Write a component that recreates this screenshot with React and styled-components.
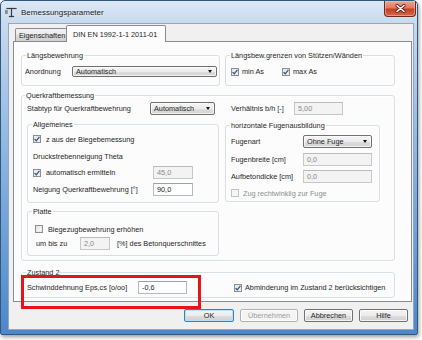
import React from 'react';
import styled, { createGlobalStyle } from 'styled-components';

const Global = createGlobalStyle`
  html, body { margin: 0; padding: 0; background: #ffffff; }
  body {
    font-family: "Liberation Sans", Arial, sans-serif;
    font-size: 7.3px;
    color: #262626;
  }
  * { box-sizing: border-box; }
`;

const Stage = styled.div`
  width: 422px;
  height: 340px;
  overflow: hidden;
  background: #ffffff;
`;

const Window = styled.div`
  width: 418px;
  height: 335px;
  display: flex;
  flex-direction: column;
  border: 1px solid #31577f;
  border-radius: 5px 5px 2px 2px;
  background: linear-gradient(180deg, #dce8f4 0px, #c8daee 22px, #a8c5e5 90px, #7ba8da 200px, #4d87c8 100%);
  box-shadow: 1px 2px 4px rgba(0, 0, 0, 0.4);
`;

const TitleBar = styled.div`
  height: 22px;
  display: flex;
  align-items: center;
  padding-left: 4px;
  flex: none;
`;

const Title = styled.span`
  margin-left: 4px;
  font-size: 8px;
  color: #1a1a1a;
  text-shadow: 0 0 3px rgba(255, 255, 255, 0.9);
`;

const CloseButton = styled.div`
  align-self: flex-start;
  margin-left: auto;
  margin-right: 1px;
  width: 32px;
  height: 16px;
  border: 1px solid #6a2a1d;
  border-top: none;
  border-radius: 0 0 4px 4px;
  background: linear-gradient(180deg, #e9a897 0%, #d97b64 45%, #c4401f 55%, #d56a4d 100%);
  box-shadow: inset 0 0 0 1px rgba(255, 210, 200, 0.45);
  display: flex;
  align-items: center;
  justify-content: center;
`;

const Client = styled.div`
  flex: 1;
  margin: 0 3px 4px 7px;
  border: 1px solid #8ea8c6;
  background: #f0f0f0;
  display: flex;
  flex-direction: column;
  padding: 1px 1px 0 4px;
`;

const TabStrip = styled.div`
  display: flex;
  align-items: flex-end;
  height: 16px;
  padding-left: 2px;
  flex: none;
`;

const Tab = styled.div`
  position: relative;
  z-index: ${p => (p.$active ? 2 : 1)};
  height: ${p => (p.$active ? 17 : 13)}px;
  width: ${p => p.$w}px;
  margin-left: ${p => (p.$active ? -2 : 0)}px;
  margin-bottom: ${p => (p.$active ? -1 : 0)}px;
  padding-left: ${p => (p.$active ? 6 : 3)}px;
  border: 1px solid #898c95;
  border-bottom: none;
  border-radius: 2px 2px 0 0;
  background: ${p => (p.$active ? '#fcfcfc' : 'linear-gradient(180deg, #f2f2f2, #ebebeb 50%, #dddddd 50%, #cfcfcf)')};
  display: flex;
  align-items: center;
  white-space: nowrap;
  color: #1e1e1e;
`;

const Panel = styled.div`
  border: 1px solid #898c95;
  background: #fcfcfc;
  padding: 9px 16px 3px 7px;
  display: flex;
  flex-direction: column;
`;

const TopRow = styled.div`
  display: grid;
  grid-template-columns: 199px 170px;
  column-gap: 5px;
`;

const Group = styled.fieldset`
  position: relative;
  margin: ${p => p.$mt ?? 0}px 0 0 0;
  padding: 0;
  min-width: 0;
  border: 1px solid #d5dfe5;
  border-radius: 3px;
  box-shadow: inset 1px 1px 0 #ffffff, 1px 1px 0 #ffffff;
`;

const Legend = styled.legend`
  margin-left: ${p => p.$lx ?? 4}px;
  padding: 0 1px;
  height: 9px;
  line-height: 9px;
  font-size: 7.3px;
  color: #262626;
  white-space: nowrap;
`;

const GroupBody = styled.div`
  display: flex;
  flex-direction: column;
  padding: ${p => p.$pad};
`;

const Columns = styled.div`
  display: grid;
  grid-template-columns: 192px 155px;
  column-gap: 6px;
  align-items: start;
  margin-top: ${p => p.$mt ?? 0}px;
`;

const Column = styled.div`
  display: flex;
  flex-direction: column;
  padding-top: ${p => p.$pt ?? 0}px;
  padding-left: ${p => p.$pl ?? 0}px;
`;

const Field = styled.div`
  display: grid;
  grid-template-columns: ${p => p.$cols};
  align-items: center;
  height: ${p => p.$h ?? 13}px;
  margin-top: ${p => p.$mt ?? 0}px;
  padding-left: ${p => p.$pl ?? 0}px;
`;

const Label = styled.span`
  white-space: nowrap;
  line-height: 9px;
  padding-left: ${p => p.$pl ?? 0}px;
  color: ${p => (p.$disabled ? '#8c8c8c' : 'inherit')};
`;

const TextLine = styled.div`
  height: 10px;
  line-height: 10px;
  white-space: nowrap;
  margin-top: ${p => p.$mt ?? 0}px;
`;

const InputBox = styled.div`
  height: ${p => p.$h ?? 13}px;
  border: 1px solid ${p => (p.$disabled ? '#c6c8cc' : '#b6b9c1')};
  border-top-color: ${p => (p.$disabled ? '#b9bbbf' : '#9da1aa')};
  background: ${p => (p.$disabled ? '#f3f3f3' : '#ffffff')};
  color: ${p => (p.$disabled ? '#8a8a8a' : '#1e1e1e')};
  padding-left: 3px;
  display: flex;
  align-items: center;
  white-space: nowrap;
`;

const SelectBox = styled.div`
  height: ${p => p.$h ?? 13}px;
  border: 1px solid #707070;
  border-radius: 2px;
  background: linear-gradient(180deg, #f4f4f4, #ececec 50%, #dfdfdf 50%, #d2d2d2);
  box-shadow: inset 0 0 0 1px rgba(255, 255, 255, 0.7);
  display: flex;
  align-items: center;
  justify-content: space-between;
  padding: 0 4px 0 3px;
  white-space: nowrap;
  color: #1e1e1e;
`;

const Arrow = styled.span`
  width: 0;
  height: 0;
  border-left: 2.5px solid transparent;
  border-right: 2.5px solid transparent;
  border-top: 3px solid #111;
`;

const CheckItem = styled.div`
  display: flex;
  align-items: center;
  gap: ${p => p.$gap ?? 5}px;
  height: 10px;
  white-space: nowrap;
  width: ${p => (p.$w ? `${p.$w}px` : 'auto')};
  margin-top: ${p => p.$mt ?? 0}px;
  color: ${p => (p.$disabled ? '#8c8c8c' : 'inherit')};
`;

const CheckRow = styled.div`
  display: flex;
  align-items: center;
  height: ${p => p.$h ?? 11}px;
`;

const Box = styled.span`
  flex: none;
  width: 8px;
  height: 8px;
  border: 1px solid ${p => (p.$disabled ? '#c2c2c2' : '#8e8f8f')};
  background: ${p => (p.$disabled ? '#f4f4f4' : 'linear-gradient(135deg, #dcdedf, #f7f8f8 70%, #ffffff)')};
  box-shadow: inset 0 0 0 1px ${p => (p.$disabled ? '#f7f7f7' : '#e9eaec')};
  display: flex;
  align-items: center;
  justify-content: center;
`;

const ButtonRow = styled.div`
  display: flex;
  justify-content: flex-end;
  gap: 6px;
  margin-top: 7px;
  padding: 0 4px 7px 0;
  flex: none;
`;

const Button = styled.button`
  width: ${p => p.$w}px;
  height: 13px;
  padding: 0;
  font-family: inherit;
  font-size: 7.3px;
  border: 1px solid ${p => (p.$default ? '#3c7fb1' : p.disabled ? '#adb2b5' : '#707070')};
  border-radius: 2px;
  background: ${p => (p.disabled ? '#f4f4f4' : 'linear-gradient(180deg, #f4f4f4, #ececec 50%, #dedede 50%, #d0d0d0)')};
  box-shadow: inset 0 0 0 1px ${p => (p.$default ? '#b8e0f8' : 'rgba(255,255,255,0.75)')};
  color: ${p => (p.disabled ? '#9d9d9d' : '#1e1e1e')};
`;

const Highlight = styled.div`
  position: absolute;
  left: -1px;
  top: -2px;
  width: 180px;
  height: 34px;
  border: 3px solid #e3141b;
  pointer-events: none;
`;

function TitleIcon() {
  return (
    <svg width="12" height="12" viewBox="0 0 12 12">
      <g stroke="#3a3a3a" strokeWidth="1.2" fill="none" strokeLinecap="square">
        <path d="M2 2.5H11" />
        <path d="M6.5 2.5V10.5" />
        <path d="M4.5 10.5H8.5" />
        <path d="M0.5 5H2.2M0.5 7H2.2" />
      </g>
    </svg>
  );
}

function CloseGlyph() {
  return (
    <svg width="11" height="9" viewBox="0 0 11 9">
      <path d="M2 1.5L9 7.5M9 1.5L2 7.5" stroke="#5a1d12" strokeWidth="3" strokeLinecap="round" />
      <path d="M2 1.5L9 7.5M9 1.5L2 7.5" stroke="#ffffff" strokeWidth="1.6" strokeLinecap="round" />
    </svg>
  );
}

function Check({ checked, disabled, children, gap, w, mt }) {
  return (
    <CheckItem $gap={gap} $w={w} $mt={mt} $disabled={disabled}>
      <Box $disabled={disabled}>
        {checked && (
          <svg width="6" height="6" viewBox="0 0 6 6">
            <path d="M0.6 3.1L2.3 4.8L5.4 0.9" stroke="#34508e" strokeWidth="1.3" fill="none" />
          </svg>
        )}
      </Box>
      <span>{children}</span>
    </CheckItem>
  );
}

function Select({ children, h }) {
  return (
    <SelectBox $h={h}>
      <span>{children}</span>
      <Arrow />
    </SelectBox>
  );
}

export default function App() {
  return (
    <>
      <Global />
      <Stage>
        <Window>
          <TitleBar>
            <TitleIcon />
            <Title>Bemessungsparameter</Title>
            <CloseButton>
              <CloseGlyph />
            </CloseButton>
          </TitleBar>
          <Client>
            <TabStrip>
              <Tab $w={53}>Eigenschaften</Tab>
              <Tab $w={100} $active>DIN EN 1992-1-1 2011-01</Tab>
            </TabStrip>
            <Panel>
              <TopRow>
                <Group>
                  <Legend $lx={4}>Längsbewehrung</Legend>
                  <GroupBody $pad="6px 0 8px 3px">
                    <Field $cols="47px 145px" $h={11}>
                      <Label>Anordnung</Label>
                      <Select h={11}>Automatisch</Select>
                    </Field>
                  </GroupBody>
                </Group>
                <Group>
                  <Legend $lx={4}>Längsbew.grenzen von Stützen/Wänden</Legend>
                  <GroupBody $pad="6px 0 8px 5px">
                    <CheckRow $h={11}>
                      <Check checked w={51} gap={3}>min As</Check>
                      <Check checked gap={3}>max As</Check>
                    </CheckRow>
                  </GroupBody>
                </Group>
              </TopRow>

              <Group $mt={5}>
                <Legend $lx={3}>Querkraftbemessung</Legend>
                <GroupBody $pad="2px 0 4px 5px">
                  <Columns>
                    <Field $cols="123px 65px">
                      <Label>Stabtyp für Querkraftbewehrung</Label>
                      <Select>Automatisch</Select>
                    </Field>
                    <Field $cols="63px 49px" $pl={6}>
                      <Label>Verhältnis b/h [-]</Label>
                      <InputBox $disabled>5,00</InputBox>
                    </Field>
                  </Columns>
                  <Columns $mt={5}>
                    <Column>
                      <Group>
                        <Legend $lx={4}>Allgemeines</Legend>
                        <GroupBody $pad="5px 0 6px 5px">
                          <Check checked gap={5}>z aus der Biegebemessung</Check>
                          <TextLine $mt={8}>Druckstrebenneigung Theta</TextLine>
                          <Field $cols="120px 40px" $mt={4}>
                            <Check checked gap={5}>automatisch ermitteln</Check>
                            <InputBox $disabled>45,0</InputBox>
                          </Field>
                          <Field $cols="120px 40px" $mt={4}>
                            <Label>Neigung Querkraftbewehrung [°]</Label>
                            <InputBox>90,0</InputBox>
                          </Field>
                        </GroupBody>
                      </Group>
                      <Group $mt={4}>
                        <Legend $lx={4}>Platte</Legend>
                        <GroupBody $pad="8px 0 5px 7px">
                          <Check gap={5}>Biegezugbewehrung erhöhen</Check>
                          <Field $cols="45px 30px auto" $mt={3}>
                            <Label $pl={1}>um bis zu</Label>
                            <InputBox $disabled>2,0</InputBox>
                            <Label $pl={7}>[%] des Betonquerschnittes</Label>
                          </Field>
                        </GroupBody>
                      </Group>
                    </Column>
                    <Column $pt={1}>
                      <Group>
                        <Legend $lx={4}>horizontale Fugenausbildung</Legend>
                        <GroupBody $pad="5px 0 3px 5px">
                          <Field $cols="72px 69px">
                            <Label>Fugenart</Label>
                            <Select>Ohne Fuge</Select>
                          </Field>
                          <Field $cols="72px 69px" $mt={5}>
                            <Label>Fugenbreite [cm]</Label>
                            <InputBox $disabled>0,0</InputBox>
                          </Field>
                          <Field $cols="72px 69px" $mt={4}>
                            <Label>Aufbetondicke [cm]</Label>
                            <InputBox $disabled>0,0</InputBox>
                          </Field>
                          <Check disabled gap={4} mt={5}>Zug rechtwinklig zur Fuge</Check>
                        </GroupBody>
                      </Group>
                    </Column>
                  </Columns>
                </GroupBody>
              </Group>

              <Group $mt={7}>
                <Legend $lx={4}>Zustand 2</Legend>
                <GroupBody $pad="4px 0 3px 5px">
                  <Columns>
                    <Field $cols="111px 49px">
                      <Label>Schwinddehnung Eps,cs [o/oo]</Label>
                      <InputBox>-0,6</InputBox>
                    </Field>
                    <Column $pl={9}>
                      <CheckRow $h={13}>
                        <Check checked gap={3}>Abminderung im Zustand 2 berücksichtigen</Check>
                      </CheckRow>
                    </Column>
                  </Columns>
                </GroupBody>
                <Highlight />
              </Group>
            </Panel>
            <ButtonRow>
              <Button $w={50} $default>OK</Button>
              <Button $w={58} disabled>Übernehmen</Button>
              <Button $w={49}>Abbrechen</Button>
              <Button $w={49}>Hilfe</Button>
            </ButtonRow>
          </Client>
        </Window>
      </Stage>
    </>
  );
}
